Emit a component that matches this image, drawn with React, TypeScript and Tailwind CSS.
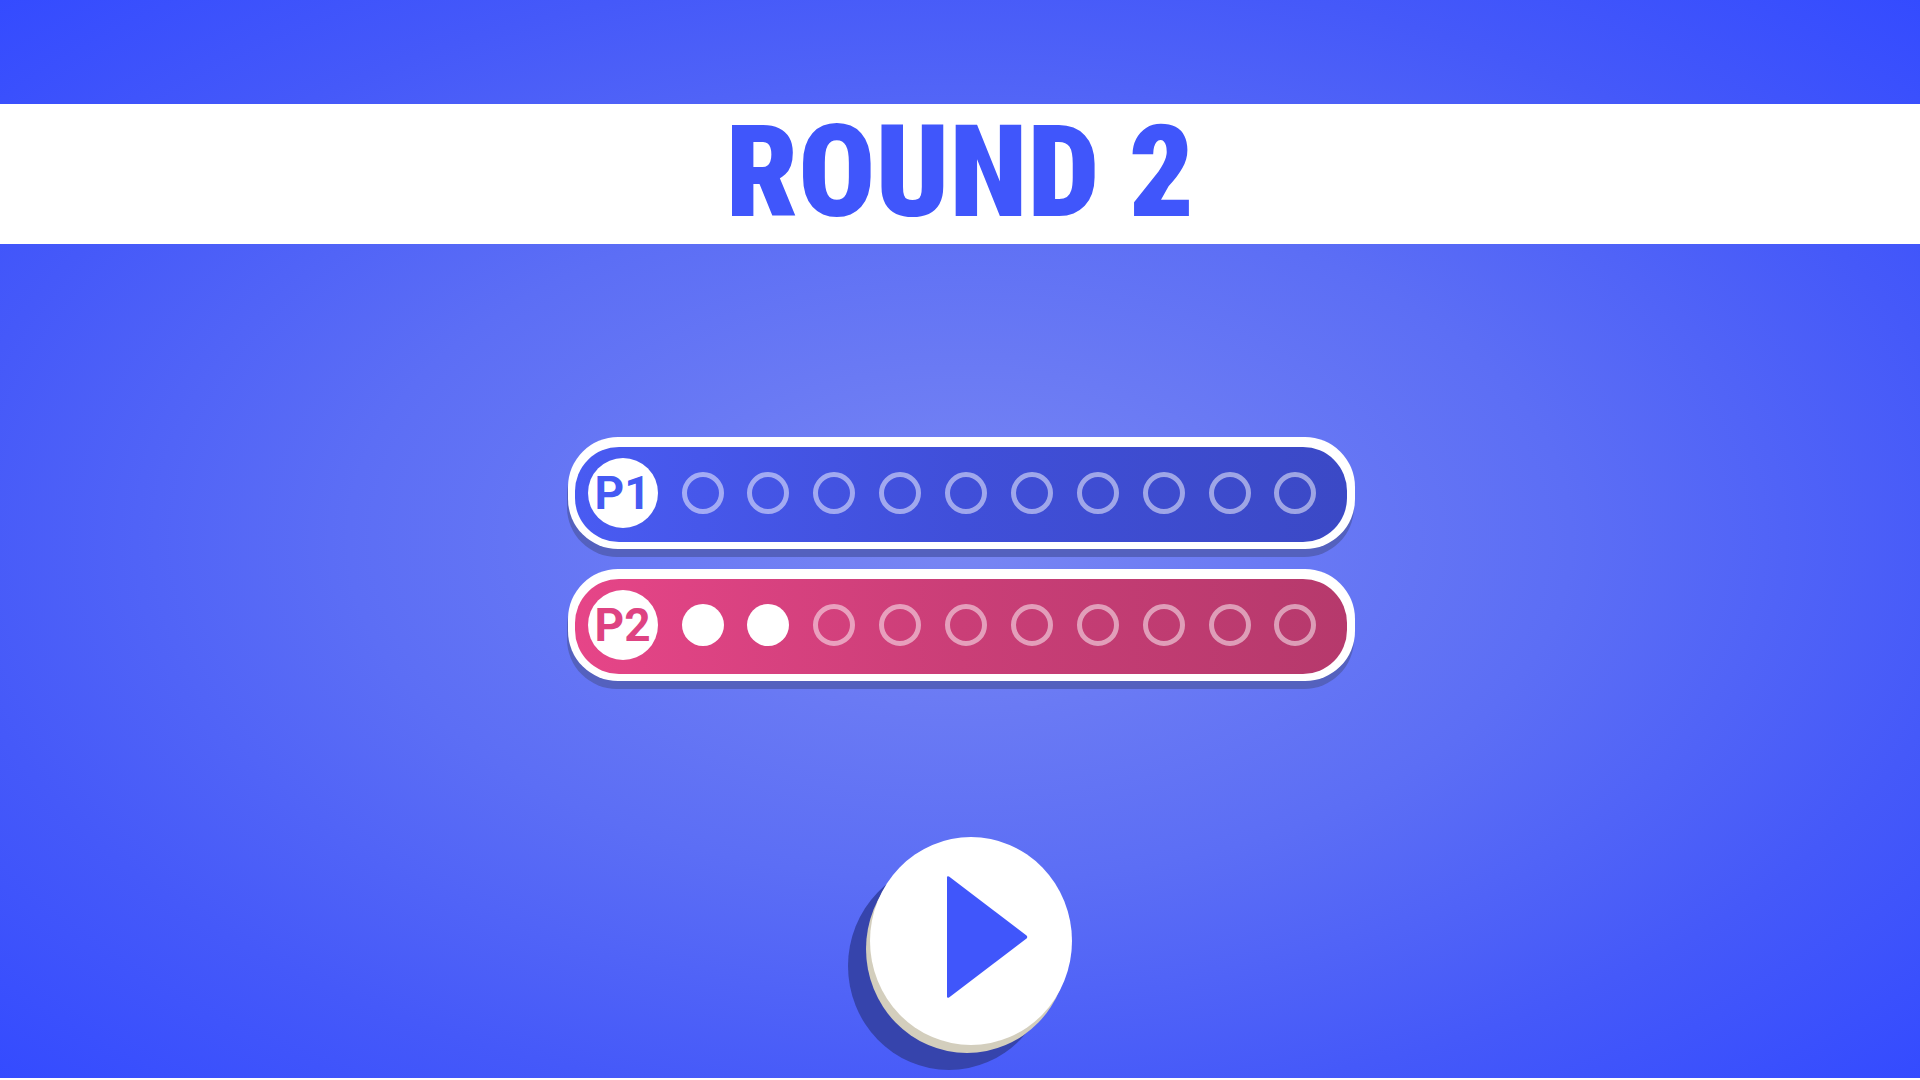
type Player = {
  name: string;
  score: number;
  bar: string;
  label: string;
};

const MAX_SCORE = 10;

const players: Player[] = [
  { name: "P1", score: 0, bar: "from-[#495bf2] via-[#404fd9] to-[#3b49c6]", label: "text-[#455af3]" },
  { name: "P2", score: 2, bar: "from-[#e64588] via-[#ca3e77] to-[#b6396c]", label: "text-[#de4382]" },
];

function ScoreBar({ player }: { player: Player }) {
  return (
    <li className="w-full rounded-[50px] bg-white pt-[10px] pr-2 pb-[7px] pl-[7px] shadow-[-1px_8px_0_#5461be]">
      <div
        className={`flex h-[95px] items-center gap-6 rounded-[44px] bg-linear-to-r pr-[30px] pb-1 pl-[13px] ${player.bar}`}
      >
        <div
          className={`flex size-[70px] shrink-0 items-center justify-start rounded-full bg-white pl-[7px] text-[46px] leading-none font-bold ${player.label}`}
        >
          {player.name}
        </div>
        <div
          role="img"
          aria-label={`${player.score} of ${MAX_SCORE} points`}
          className="flex flex-1 justify-between"
        >
          {Array.from({ length: MAX_SCORE }, (_, i) => (
            <span
              key={i}
              className={
                i < player.score
                  ? "size-[42px] rounded-full bg-white"
                  : "size-[42px] rounded-full border-5 border-white/50"
              }
            />
          ))}
        </div>
      </div>
    </li>
  );
}

export default function App() {
  return (
    <div className="flex min-h-screen flex-col bg-white pb-0.5 font-['Roboto',sans-serif]">
      <main className="flex flex-1 flex-col items-center bg-[radial-gradient(ellipse_farthest-corner_at_center,#7886f3_0%,#5c6ef5_45%,#4559f9_75%,#344bff_100%)] pt-26">
        <header className="flex h-35 w-full items-center justify-center bg-white pb-1">
          <h1 className="font-['Roboto_Condensed','Roboto',sans-serif] text-[128px] leading-none font-black text-[#4056fb]">
            ROUND 2
          </h1>
        </header>

        <ul className="mt-[193px] ml-0.5 flex w-full max-w-[787px] flex-col gap-5">
          {players.map((player) => (
            <ScoreBar key={player.name} player={player} />
          ))}
        </ul>

        <button
          type="button"
          aria-label="Play next round"
          className="mt-39 ml-[22px] flex h-52 w-[202px] cursor-pointer items-center justify-center rounded-[50%] bg-white pb-2 pl-8 shadow-[-4px_8px_0_#d3cebd,-22px_25px_0_#3644ac]"
        >
          <svg viewBox="0 0 82 124" className="h-31 w-[82px] fill-[#4056fb]" aria-hidden="true">
            <path d="M1 2.5Q1 .5 3 1.5L80.500 60.500Q82 62 80.500 63.500L3 122.500Q1 123.500 1 121.500Z" />
          </svg>
        </button>
      </main>
    </div>
  );
}
